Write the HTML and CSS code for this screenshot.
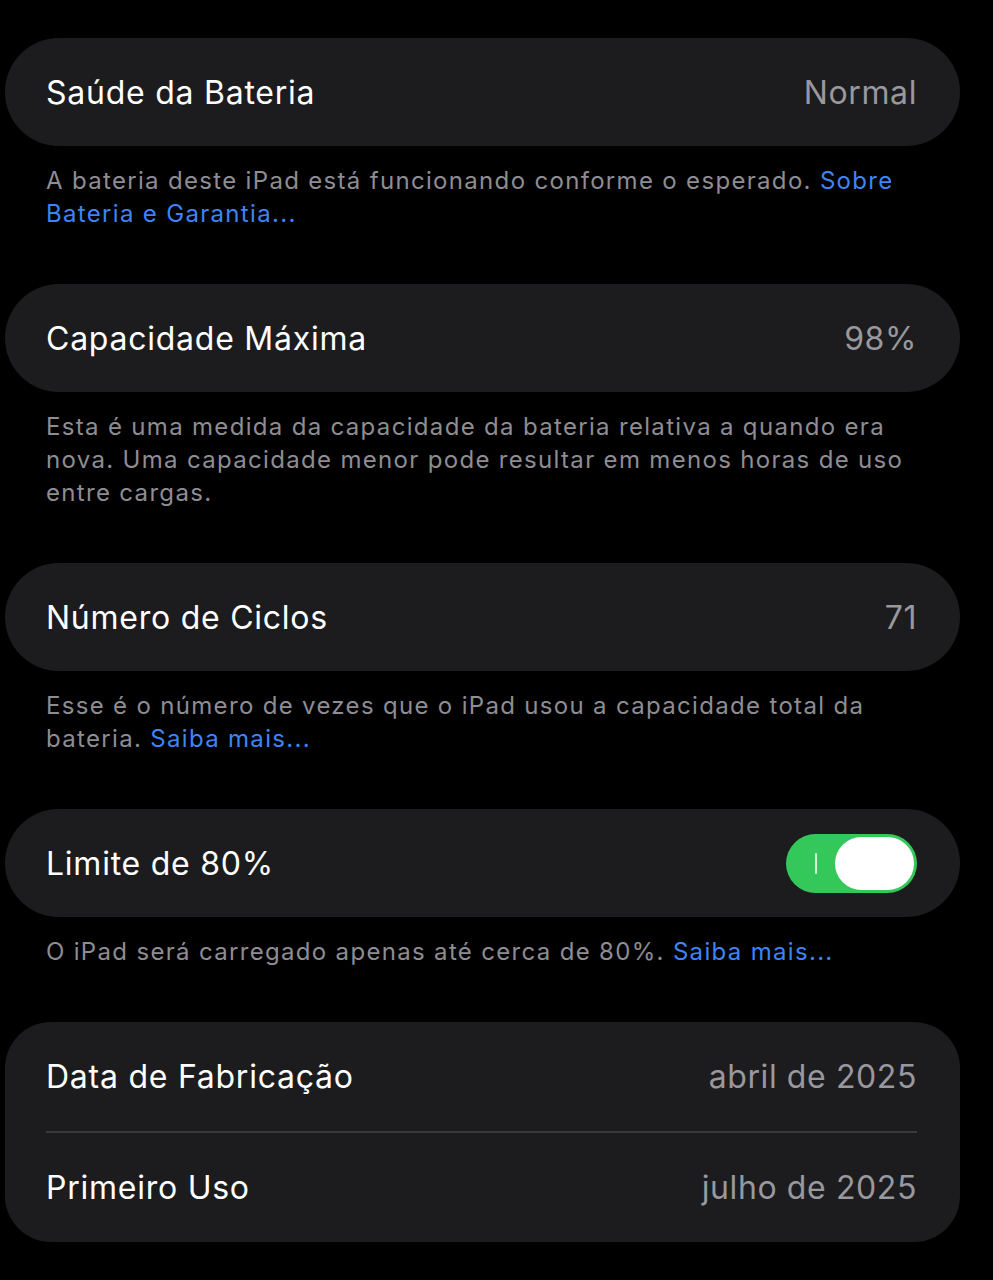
FILE: index.html
```html
<!DOCTYPE html>
<html lang="pt-BR">
<head>
<meta charset="utf-8">
<title>Bateria</title>
<link rel="stylesheet" href="styles.css">
</head>
<body>
<main class="page">
  <section class="group">
    <div class="card">
      <div class="row"><span class="label">Saúde da Bateria</span><span class="value">Normal</span></div>
    </div>
    <p class="note">A bateria deste iPad está funcionando conforme o esperado. <a class="link">Sobre<br>Bateria e Garantia...</a></p>
  </section>
  <section class="group">
    <div class="card">
      <div class="row"><span class="label">Capacidade Máxima</span><span class="value">98%</span></div>
    </div>
    <p class="note">Esta é uma medida da capacidade da bateria relativa a quando era<br>nova. Uma capacidade menor pode resultar em menos horas de uso<br>entre cargas.</p>
  </section>
  <section class="group">
    <div class="card">
      <div class="row"><span class="label">Número de Ciclos</span><span class="value">71</span></div>
    </div>
    <p class="note">Esse é o número de vezes que o iPad usou a capacidade total da<br>bateria. <a class="link">Saiba mais...</a></p>
  </section>
  <section class="group">
    <div class="card">
      <div class="row"><span class="label">Limite de 80%</span>
        <span class="switch"><span class="switch-mark"></span><span class="knob"></span></span>
      </div>
    </div>
    <p class="note">O iPad será carregado apenas até cerca de 80%. <a class="link">Saiba mais...</a></p>
  </section>
  <section class="group">
    <div class="card card-multi">
      <div class="row"><span class="label">Data de Fabricação</span><span class="value">abril de 2025</span></div>
      <div class="divider"></div>
      <div class="row"><span class="label">Primeiro Uso</span><span class="value">julho de 2025</span></div>
    </div>
  </section>
</main>
</body>
</html>
```
FILE: styles.css
```css
html, body {
  margin: 0;
  padding: 0;
  background: #000;
}
body {
  width: 993px;
  min-height: 1280px;
  font-family: Inter, "Noto Sans", "Liberation Sans", sans-serif;
  color: #fff;
}
.page {
  padding: 38px 0 0 5px;
  width: 955px;
}
.card {
  background: #1c1c1e;
  border-radius: 55px;
}
.card-multi {
  border-radius: 46px;
}
.row {
  height: 108px;
  display: flex;
  align-items: center;
  justify-content: space-between;
  padding: 0 43px 0 41px;
}
.card-multi .row {
  height: 109px;
}
.label {
  font-size: 32px;
  letter-spacing: 0.75px;
}
.value {
  font-size: 32px;
  letter-spacing: 0.6px;
  color: #98989e;
}
.divider {
  height: 2px;
  background: #3a3a3c;
  margin: 0 43px 0 41px;
}
.note {
  margin: 0;
  padding: 18px 10px 54px 41px;
  font-size: 24px;
  line-height: 33px;
  color: #8d8d93;
  letter-spacing: 1.32px;
  white-space: nowrap;
}
.link {
  color: #3d85f6;
}
.switch {
  position: relative;
  width: 131px;
  height: 59px;
  border-radius: 30px;
  background: #34c759;
  display: block;
}
.switch-mark {
  position: absolute;
  left: 29px;
  top: 19px;
  width: 2px;
  height: 21px;
  background: #d8f5dd;
  border-radius: 1px;
}
.knob {
  position: absolute;
  right: 3px;
  top: 3px;
  width: 79px;
  height: 53px;
  border-radius: 27px;
  background: #fff;
}
```
